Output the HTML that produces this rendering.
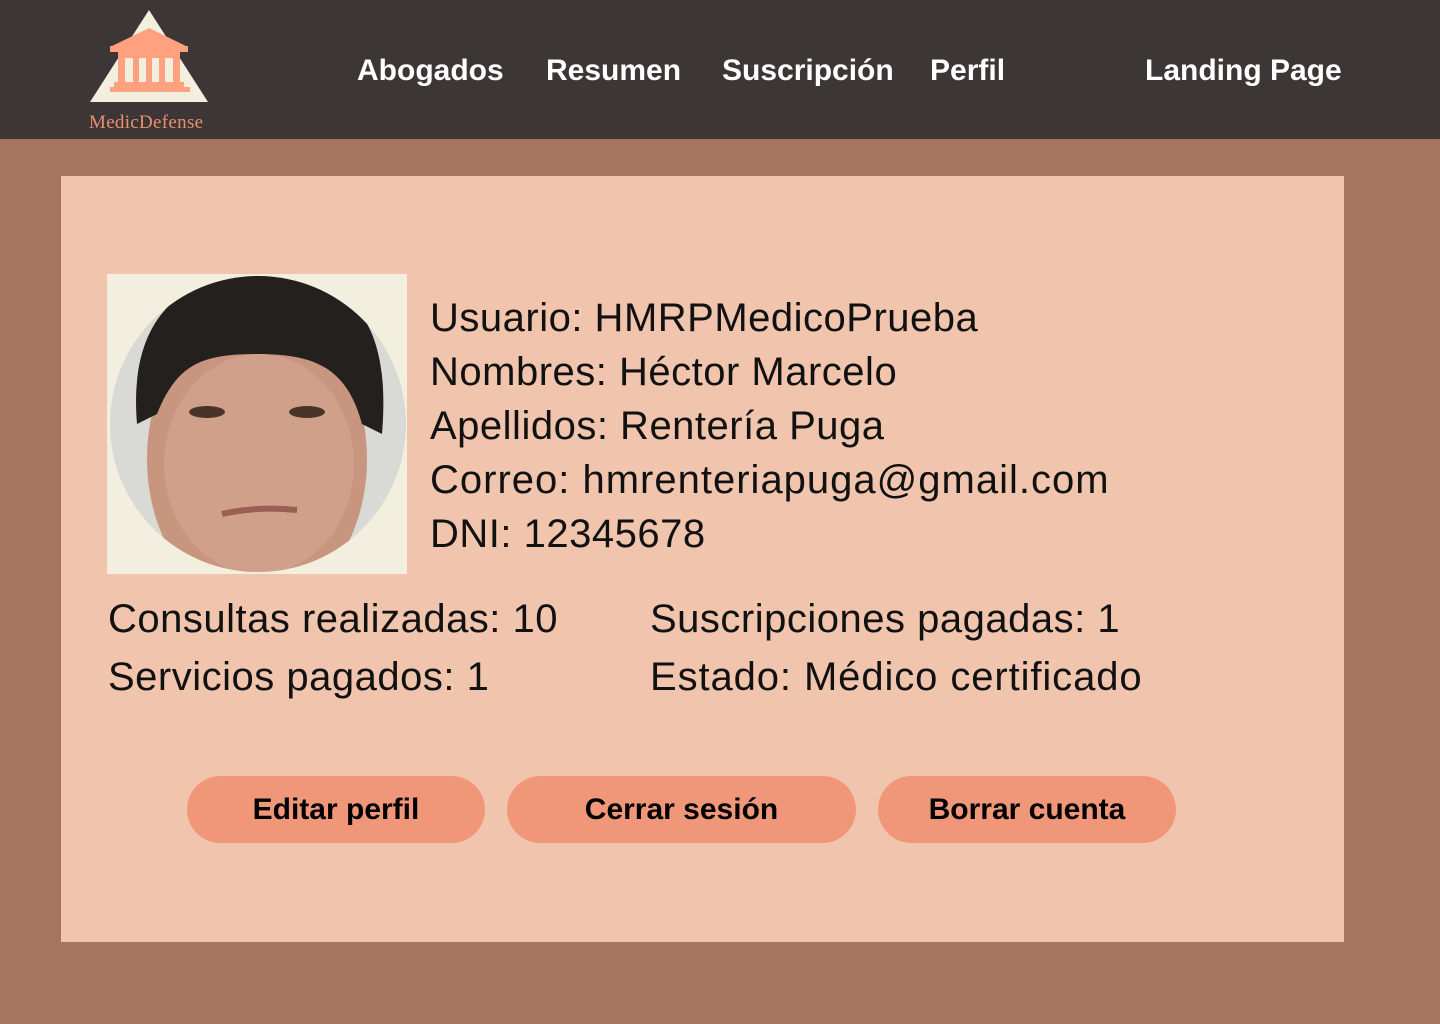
<!DOCTYPE html>
<html><head><meta charset="utf-8"><style>
*{margin:0;padding:0;box-sizing:border-box}
body{width:1440px;height:1024px;background:#a67461;font-family:"Liberation Sans","DejaVu Sans",sans-serif;position:relative;overflow:hidden}
.nav{position:absolute;left:0;top:0;width:1440px;height:139px;background:#3d3637}
.nav a{position:absolute;top:51px;color:#fff;font-weight:bold;font-size:30px;text-decoration:none;white-space:nowrap;line-height:40px}
.card{position:absolute;left:61px;top:176px;width:1283px;height:766px;background:#f1c5ad}
.t{position:absolute;color:#111;font-size:40px;white-space:nowrap;line-height:54px;letter-spacing:0.5px}
.btn{position:absolute;top:776px;height:67px;background:#f0977a;border-radius:34px;font-weight:bold;font-size:30px;color:#000;text-align:center;line-height:67px}
</style></head><body>
<div class="nav">
<svg style="position:absolute;left:88px;top:10px" width="122" height="95" viewBox="0 0 122 95">
<polygon points="61,0 120,92 2,92" fill="#f2efdf"/>
<polygon points="61,18 98,36 24,36" fill="#ffa07f"/>
<rect x="22" y="36" width="78" height="6" fill="#ffa07f"/>
<rect x="30" y="42" width="62" height="6" fill="#ffa07f"/>
<rect x="30" y="48" width="7" height="24" fill="#ffa07f"/>
<rect x="45" y="48" width="6" height="24" fill="#ffa07f"/>
<rect x="58" y="48" width="6" height="24" fill="#ffa07f"/>
<rect x="71" y="48" width="6" height="24" fill="#ffa07f"/>
<rect x="85" y="48" width="7" height="24" fill="#ffa07f"/>
<rect x="26" y="72" width="70" height="5" fill="#ffa07f"/>
<rect x="22" y="77" width="80" height="5" fill="#ffa07f"/>
</svg>
<div style="position:absolute;left:89px;top:112px;color:#e7906f;font-family:'Liberation Serif',serif;font-size:19px;letter-spacing:0.3px">MedicDefense</div>
<a style="left:357px">Abogados</a>
<a style="left:546px">Resumen</a>
<a style="left:722px">Suscripción</a>
<a style="left:930px">Perfil</a>
<a style="left:1145px">Landing Page</a>
</div>
<div class="card"></div>
<svg style="position:absolute;left:107px;top:274px" width="300" height="300" viewBox="0 0 300 300">
<rect width="300" height="300" fill="#f2efdf"/>
<defs><clipPath id="c"><circle cx="151" cy="150" r="148"/></clipPath></defs>
<g clip-path="url(#c)">
<rect width="300" height="300" fill="#d9dad6"/>
<ellipse cx="150" cy="185" rx="110" ry="150" fill="#c8957f"/>
<path d="M30,150 C20,30 90,0 150,0 C240,0 285,40 275,160 L255,150 C240,95 210,80 150,80 C95,80 70,90 50,140 Z" fill="#23201e"/>
<ellipse cx="152" cy="190" rx="95" ry="110" fill="#d0a08a"/>
<ellipse cx="100" cy="138" rx="18" ry="6" fill="#4a3328"/>
<ellipse cx="200" cy="138" rx="18" ry="6" fill="#4a3328"/>
<path d="M115,240 Q150,232 190,236" stroke="#9a5e52" stroke-width="6" fill="none"/>
</g>
</svg>
<div class="t" style="left:430px;top:291px">Usuario: HMRPMedicoPrueba</div>
<div class="t" style="left:430px;top:345px">Nombres: Héctor Marcelo</div>
<div class="t" style="left:430px;top:399px">Apellidos: Rentería Puga</div>
<div class="t" style="left:430px;top:453px;letter-spacing:1px">Correo: hmrenteriapuga@gmail.com</div>
<div class="t" style="left:430px;top:507px">DNI: 12345678</div>
<div class="t" style="left:108px;top:592px">Consultas realizadas: 10</div>
<div class="t" style="left:108px;top:650px">Servicios pagados: 1</div>
<div class="t" style="left:650px;top:592px">Suscripciones pagadas: 1</div>
<div class="t" style="left:650px;top:650px;letter-spacing:0.9px">Estado: Médico certificado</div>
<div class="btn" style="left:187px;width:298px">Editar perfil</div>
<div class="btn" style="left:507px;width:349px">Cerrar sesión</div>
<div class="btn" style="left:878px;width:298px">Borrar cuenta</div>
</body></html>
